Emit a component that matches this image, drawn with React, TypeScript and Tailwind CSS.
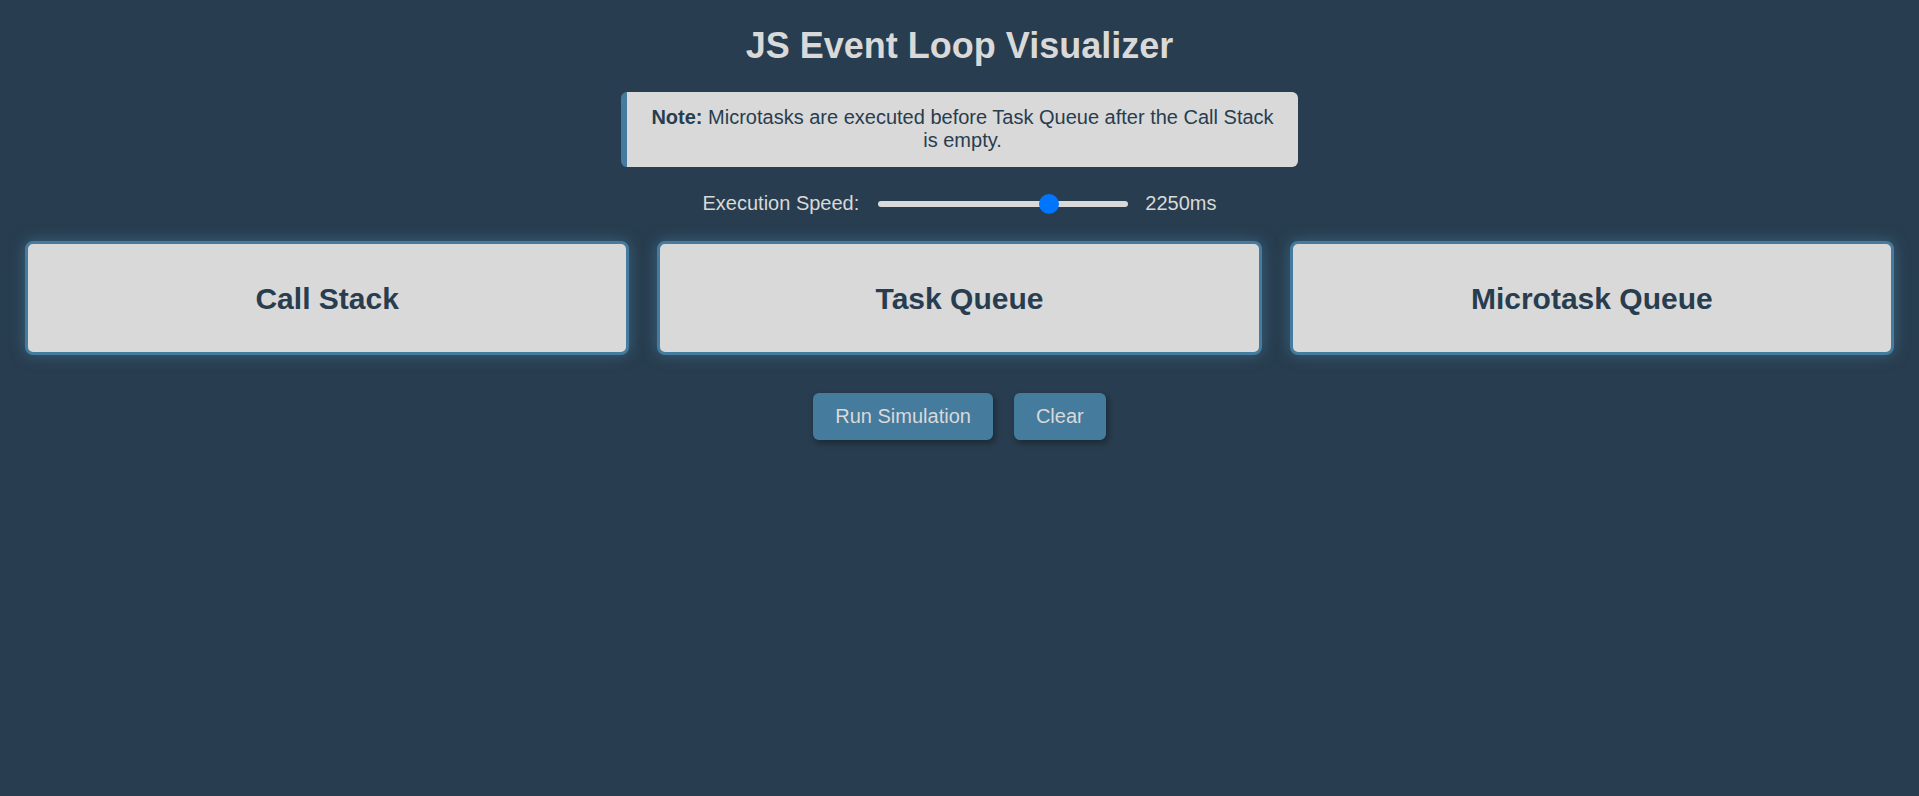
import { useState } from 'react';

const queues = ['Call Stack', 'Task Queue', 'Microtask Queue'];

export default function App() {
  // slider goes 500ms -> 3000ms
  const [speed, setSpeed] = useState(2250);

  return (
    <div className="min-h-screen bg-[#283d4f] font-['Liberation_Sans',Arial,sans-serif] text-[#d9d9d9] px-[25px] pt-[25px] pb-10">
      <h1 className="text-center text-[36px] leading-[41px] font-bold">JS Event Loop Visualizer</h1>

      <div className="mx-auto mt-[26px] w-[677px] rounded-md border-l-[6px] border-[#457b9d] bg-[#d9d9d9] px-[15px] pt-[14px] pb-[15px] text-center text-[20px] leading-[23px] text-[#283d4f]">
        <strong>Note:</strong> Microtasks are executed before Task Queue after the Call Stack is empty.
      </div>

      <div className="mt-[25px] flex items-center justify-center h-[23px] text-[20px] leading-[23px]">
        <label htmlFor="speed">Execution Speed:</label>
        <input
          id="speed"
          type="range"
          min={500}
          max={3000}
          step={250}
          value={speed}
          onChange={(e) => setSpeed(Number(e.target.value))}
          className="ml-[19px] mr-[17px] w-[250px] h-[6px] appearance-none rounded-full bg-[#d9d9d9] outline-none cursor-pointer [&::-webkit-slider-thumb]:appearance-none [&::-webkit-slider-thumb]:w-5 [&::-webkit-slider-thumb]:h-5 [&::-webkit-slider-thumb]:rounded-full [&::-webkit-slider-thumb]:bg-[#0075ff] [&::-moz-range-thumb]:w-5 [&::-moz-range-thumb]:h-5 [&::-moz-range-thumb]:rounded-full [&::-moz-range-thumb]:border-0 [&::-moz-range-thumb]:bg-[#0075ff]"
        />
        <span>{speed}ms</span>
      </div>

      <div className="mt-[26px] grid grid-cols-3 gap-[28px]">
        {queues.map((name) => (
          <div
            key={name}
            className="h-[114px] flex items-center justify-center rounded-lg border-[3px] border-[#457b9d] bg-[#d9d9d9] shadow-[0_0_15px_rgba(69,123,157,0.6)]"
          >
            <h2 className="text-[30px] leading-[35px] font-bold text-[#283d4f]">{name}</h2>
          </div>
        ))}
      </div>

      <div className="mt-[38px] flex justify-center gap-[21px]">
        <button className="rounded-md bg-[#457b9d] px-[22px] py-3 text-[20px] leading-[23px] text-[#d9d9d9] shadow-[2px_3px_6px_rgba(0,0,0,0.35)] hover:bg-[#3d6e8d]">
          Run Simulation
        </button>
        <button className="rounded-md bg-[#457b9d] px-[22px] py-3 text-[20px] leading-[23px] text-[#d9d9d9] shadow-[2px_3px_6px_rgba(0,0,0,0.35)] hover:bg-[#3d6e8d]">
          Clear
        </button>
      </div>
    </div>
  );
}
